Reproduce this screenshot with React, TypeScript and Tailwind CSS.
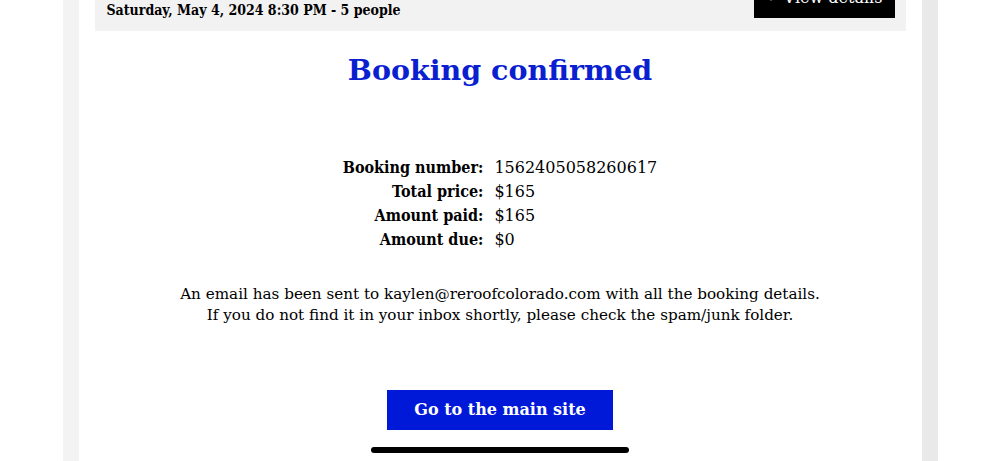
const rows = [
  { label: "Booking number:", value: "1562405058260617" },
  { label: "Total price:", value: "$165" },
  { label: "Amount paid:", value: "$165" },
  { label: "Amount due:", value: "$0" },
];

export default function App() {
  return (
    <div
      className="relative h-[461px] w-[1000px] overflow-hidden bg-white text-black"
      style={{ fontFamily: '"DejaVu Serif", serif' }}
    >
      <div className="mx-auto flex h-full w-[875px] bg-gradient-to-r from-[#f3f3f3] to-[#e9e9e9] px-[16px]">
        <div className="flex h-full w-full flex-col items-center bg-white px-[16px]">
          {/* summary bar, partly scrolled off */}
          <div className="-mt-[18px] flex h-[49px] w-full items-end justify-between bg-[#f2f2f2] pl-[12px] pr-[11px] pb-[13px]">
            <p className="-mb-[2px] font-['DejaVu_Serif_Condensed','DejaVu_Serif',serif] text-[14px] font-bold leading-[20px]">
              Saturday, May 4, 2024 8:30 PM - 5 people
            </p>
            <button className="flex h-[40px] w-[141px] items-center justify-center gap-2 bg-black text-[16px] text-white">
              <svg width="10" height="10" viewBox="0 0 10 10" fill="none" stroke="white" strokeWidth="1.8">
                <path d="M2 3.5 L5 6.5 L8 3.5" />
              </svg>
              View details
            </button>
          </div>

          <h1 className="mt-[17px] text-[28.5px] font-bold leading-[44px] text-[#0a1fd0]">Booking confirmed</h1>

          <div className="mt-[64px] grid grid-cols-[auto_auto] gap-x-[11px] leading-[24px]">
            {rows.map((r) => (
              <div key={r.label} className="contents">
                <span className="text-right font-['DejaVu_Serif_Condensed','DejaVu_Serif',serif] text-[16px] font-bold">
                  {r.label}
                </span>
                <span className="text-[16px]">{r.value}</span>
              </div>
            ))}
          </div>

          <p className="mt-[32px] text-center text-[15.2px] leading-[21px]">
            An email has been sent to kaylen@reroofcolorado.com with all the booking details.
            <br />
            If you do not find it in your inbox shortly, please check the spam/junk folder.
          </p>

          <button className="mt-[64px] h-[40px] w-[226px] bg-[#0019d9] text-[16px] font-bold text-white">
            Go to the main site
          </button>
        </div>
      </div>

      <div className="absolute bottom-[8px] left-[371px] h-[6px] w-[258px] rounded-full bg-black" />
    </div>
  );
}
